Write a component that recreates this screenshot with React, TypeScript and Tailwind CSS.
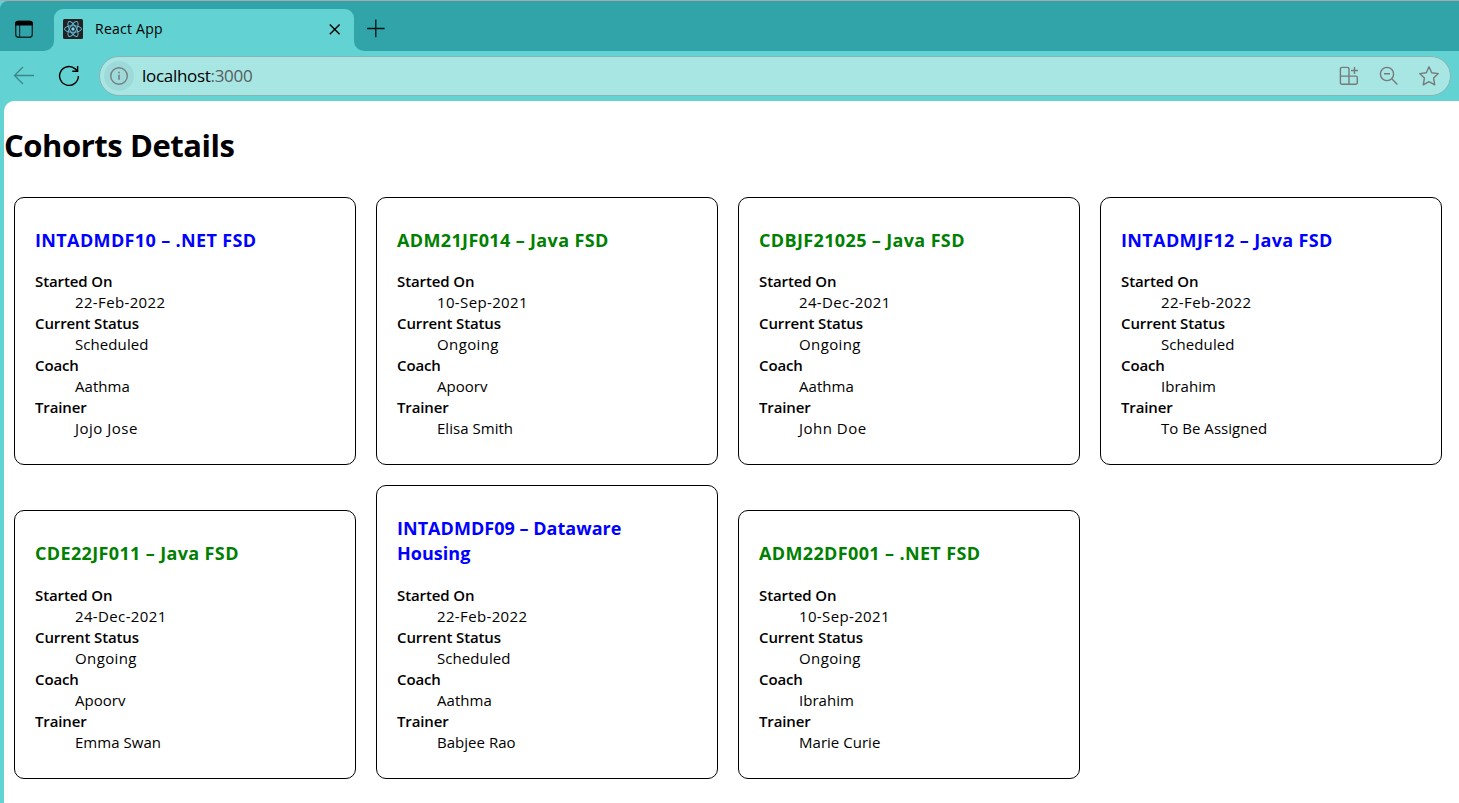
import React from "react";

type Cohort = {
  title: string;
  started: string;
  status: "Scheduled" | "Ongoing";
  coach: string;
  trainer: string;
};

const firstRow: Cohort[] = [
  { title: "INTADMDF10 – .NET FSD", started: "22-Feb-2022", status: "Scheduled", coach: "Aathma", trainer: "Jojo Jose" },
  { title: "ADM21JF014 – Java FSD", started: "10-Sep-2021", status: "Ongoing", coach: "Apoorv", trainer: "Elisa Smith" },
  { title: "CDBJF21025 – Java FSD", started: "24-Dec-2021", status: "Ongoing", coach: "Aathma", trainer: "John Doe" },
  { title: "INTADMJF12 – Java FSD", started: "22-Feb-2022", status: "Scheduled", coach: "Ibrahim", trainer: "To Be Assigned" },
];

const secondRow: Cohort[] = [
  { title: "CDE22JF011 – Java FSD", started: "24-Dec-2021", status: "Ongoing", coach: "Apoorv", trainer: "Emma Swan" },
  { title: "INTADMDF09 – Dataware Housing", started: "22-Feb-2022", status: "Scheduled", coach: "Aathma", trainer: "Babjee Rao" },
  { title: "ADM22DF001 – .NET FSD", started: "10-Sep-2021", status: "Ongoing", coach: "Ibrahim", trainer: "Marie Curie" },
];

function Field({ label, value, spacing = "tracking-[0.03px]" }: { label: string; value: string; spacing?: string }) {
  return (
    <>
      <dt className="font-semibold tracking-[-0.12px]">{label}</dt>
      <dd className={`pl-10 ${spacing}`}>{value}</dd>
    </>
  );
}

function CohortCard({ cohort, late }: { cohort: Cohort; late?: boolean }) {
  const titleSpacing = cohort.title.length > 24 ? "tracking-[0.03px]" : "tracking-[0.36px]";
  return (
    <article className="w-[342px] shrink-0 rounded-[10px] border border-black px-5 pt-[30px] pb-[25px]">
      <h3
        className={`text-[18px] leading-[25px] font-bold ${titleSpacing} ${
          cohort.status === "Ongoing" ? "text-[#008000]" : "text-[#0000ff]"
        }`}
      >
        {cohort.title}
      </h3>
      <dl className={`text-[15px] leading-[21px] ${late ? "mt-[19px]" : "mt-[18px]"}`}>
        <Field label="Started On" value={cohort.started} spacing="tracking-[0.36px]" />
        <Field
          label="Current Status"
          value={cohort.status}
          spacing={cohort.status === "Ongoing" ? "tracking-[0.38px]" : "tracking-[0.08px]"}
        />
        <Field label="Coach" value={cohort.coach} />
        <Field
          label="Trainer"
          value={cohort.trainer}
          spacing={cohort.trainer.startsWith("J") ? "tracking-[0.5px]" : "tracking-[0.03px]"}
        />
      </dl>
    </article>
  );
}

function TabStrip() {
  return (
    <div className="flex h-[50px] shrink-0">
      <div className="flex w-[54px] rounded-tl-[8px] rounded-br-[10px] bg-[#30a4a8] pt-[18px] pl-[14px]">
        <svg width="20" height="20" viewBox="0 0 20 20" fill="none">
          <rect x="1.7" y="2.4" width="16.6" height="15.9" rx="3" stroke="#0b2b2d" strokeWidth="1.4" />
          <path d="M1 6.4V4.9Q1 1.7 4.2 1.7H15.8Q19 1.7 19 4.9V6.4Z" fill="#000" />
          <path d="M5.6 6V18" stroke="#0b2b2d" strokeWidth="1.2" />
        </svg>
      </div>
      <div className="w-[300px] bg-[#30a4a8] pt-2">
        <div className="flex h-[42px] items-center rounded-t-[9px] bg-[#62d2d2] pr-[12px] pb-[2px] pl-[9px]">
          <svg width="20" height="20" viewBox="0 0 20 20" fill="none">
            <rect width="20" height="20" rx="1.5" fill="#222" />
            <g stroke="#61b9d6" strokeWidth="1">
              <ellipse cx="10" cy="10" rx="8.5" ry="3.3" />
              <ellipse cx="10" cy="10" rx="8.5" ry="3.3" transform="rotate(60 10 10)" />
              <ellipse cx="10" cy="10" rx="8.5" ry="3.3" transform="rotate(120 10 10)" />
            </g>
            <circle cx="10" cy="10" r="1.7" fill="#7bd5ee" />
          </svg>
          <span className="ml-3 pb-[2px] text-[14px] tracking-[0.25px]">React App</span>
          <svg className="ml-auto" width="14" height="14" viewBox="0 0 14 14" stroke="#000" strokeWidth="1.4">
            <path d="M1.8 2.5L11.6 12.3M11.6 2.5L1.8 12.3" />
          </svg>
        </div>
      </div>
      <div className="flex flex-1 rounded-bl-[10px] bg-[#30a4a8] pt-[18px] pl-3">
        <svg width="20" height="20" viewBox="0 0 20 20" stroke="#061415" strokeWidth="1.3">
          <path d="M1 9.5H18.6M9.8 0.6V18.2" />
        </svg>
      </div>
    </div>
  );
}

function Toolbar() {
  return (
    <div className="flex h-[50px] shrink-0 items-center pr-2 pl-[13px]">
      <svg width="22" height="20" viewBox="0 0 22 20" fill="none" stroke="#3c8687" strokeWidth="1.3">
        <path d="M21 9.5H1.5M10 1L1.5 9.5L10 18" />
      </svg>
      <svg className="ml-[23px]" width="22" height="22" viewBox="0 0 22 22" fill="none" stroke="#000" strokeWidth="1.4">
        <path d="M20.4 11A9.4 9.4 0 1 1 17.2 3.9L19.6 6.1" />
        <path d="M19.6 1V6.3H14.3" />
      </svg>
      <div className="ml-[19px] flex h-10 flex-1 items-center rounded-full border border-[#89b4b4] bg-[#a8e6e4] pr-[10px] pl-[4px]">
        <div className="flex size-[30px] items-center justify-center rounded-full bg-[#9edada]">
          <svg width="20" height="20" viewBox="0 0 20 20" fill="none" stroke="#737f7f" strokeWidth="1.4">
            <circle cx="10" cy="10" r="8.3" />
            <path d="M10 8.8V13.8M10 5.8V7.3" strokeWidth="1.6" />
          </svg>
        </div>
        <span className="ml-[8px] text-[17px] tracking-[-0.3px]">
          localhost<span className="text-[#565d5d]">:3000</span>
        </span>
        <div className="ml-auto flex items-center text-[#747b7b]">
          <svg className="mr-5" width="20" height="20" viewBox="0 0 20 20" fill="none" stroke="currentColor" strokeWidth="1.4">
            <path d="M10 1.9V18.3H3A1.6 1.6 0 0 1 1.4 16.7V3A1.6 1.6 0 0 1 3 1.4H8.4A1.6 1.6 0 0 1 10 3M10 18.3H16.7A1.6 1.6 0 0 0 18.3 16.7V11.7A1.6 1.6 0 0 0 16.7 10.1H1.4" />
            <path d="M15.5 1V8M12 4.5H19" />
          </svg>
          <svg className="mr-[19px]" width="20" height="20" viewBox="0 0 20 20" fill="none" stroke="currentColor" strokeWidth="1.4">
            <circle cx="8" cy="8" r="6.6" />
            <path d="M5 7.8H11M12.8 12.8L18.4 18.4" />
          </svg>
          <svg width="22" height="22" viewBox="0 0 22 22" fill="none" stroke="currentColor" strokeWidth="1.4" strokeLinejoin="round">
            <path d="M11 1.8L13.7 7.8L20.3 8.6L15.6 13.1L16.7 19.8L11 16.7L5.3 19.8L6.4 13.1L1.7 8.6L8.3 7.8Z" />
          </svg>
        </div>
      </div>
    </div>
  );
}

export default function App() {
  return (
    <div className="flex h-[803px] w-[1459px] flex-col overflow-hidden border-t border-[#aaaaaa] bg-[#62d2d2] font-['Open_Sans','Noto_Sans',sans-serif] text-black">
      <TabStrip />
      <Toolbar />
      <main className="ml-1 flex-1 rounded-tl-[10px] bg-white">
        <h1 className="pt-[22px] text-[31px] leading-[44px] font-bold tracking-[-0.45px]">Cohorts Details</h1>
        <div className="mt-[30px] flex items-end gap-5 pl-[10px]">
          {firstRow.map((c) => (
            <CohortCard key={c.title} cohort={c} />
          ))}
        </div>
        <div className="mt-5 flex items-end gap-5 pl-[10px]">
          {secondRow.map((c) => (
            <CohortCard key={c.title} cohort={c} late />
          ))}
        </div>
      </main>
    </div>
  );
}
